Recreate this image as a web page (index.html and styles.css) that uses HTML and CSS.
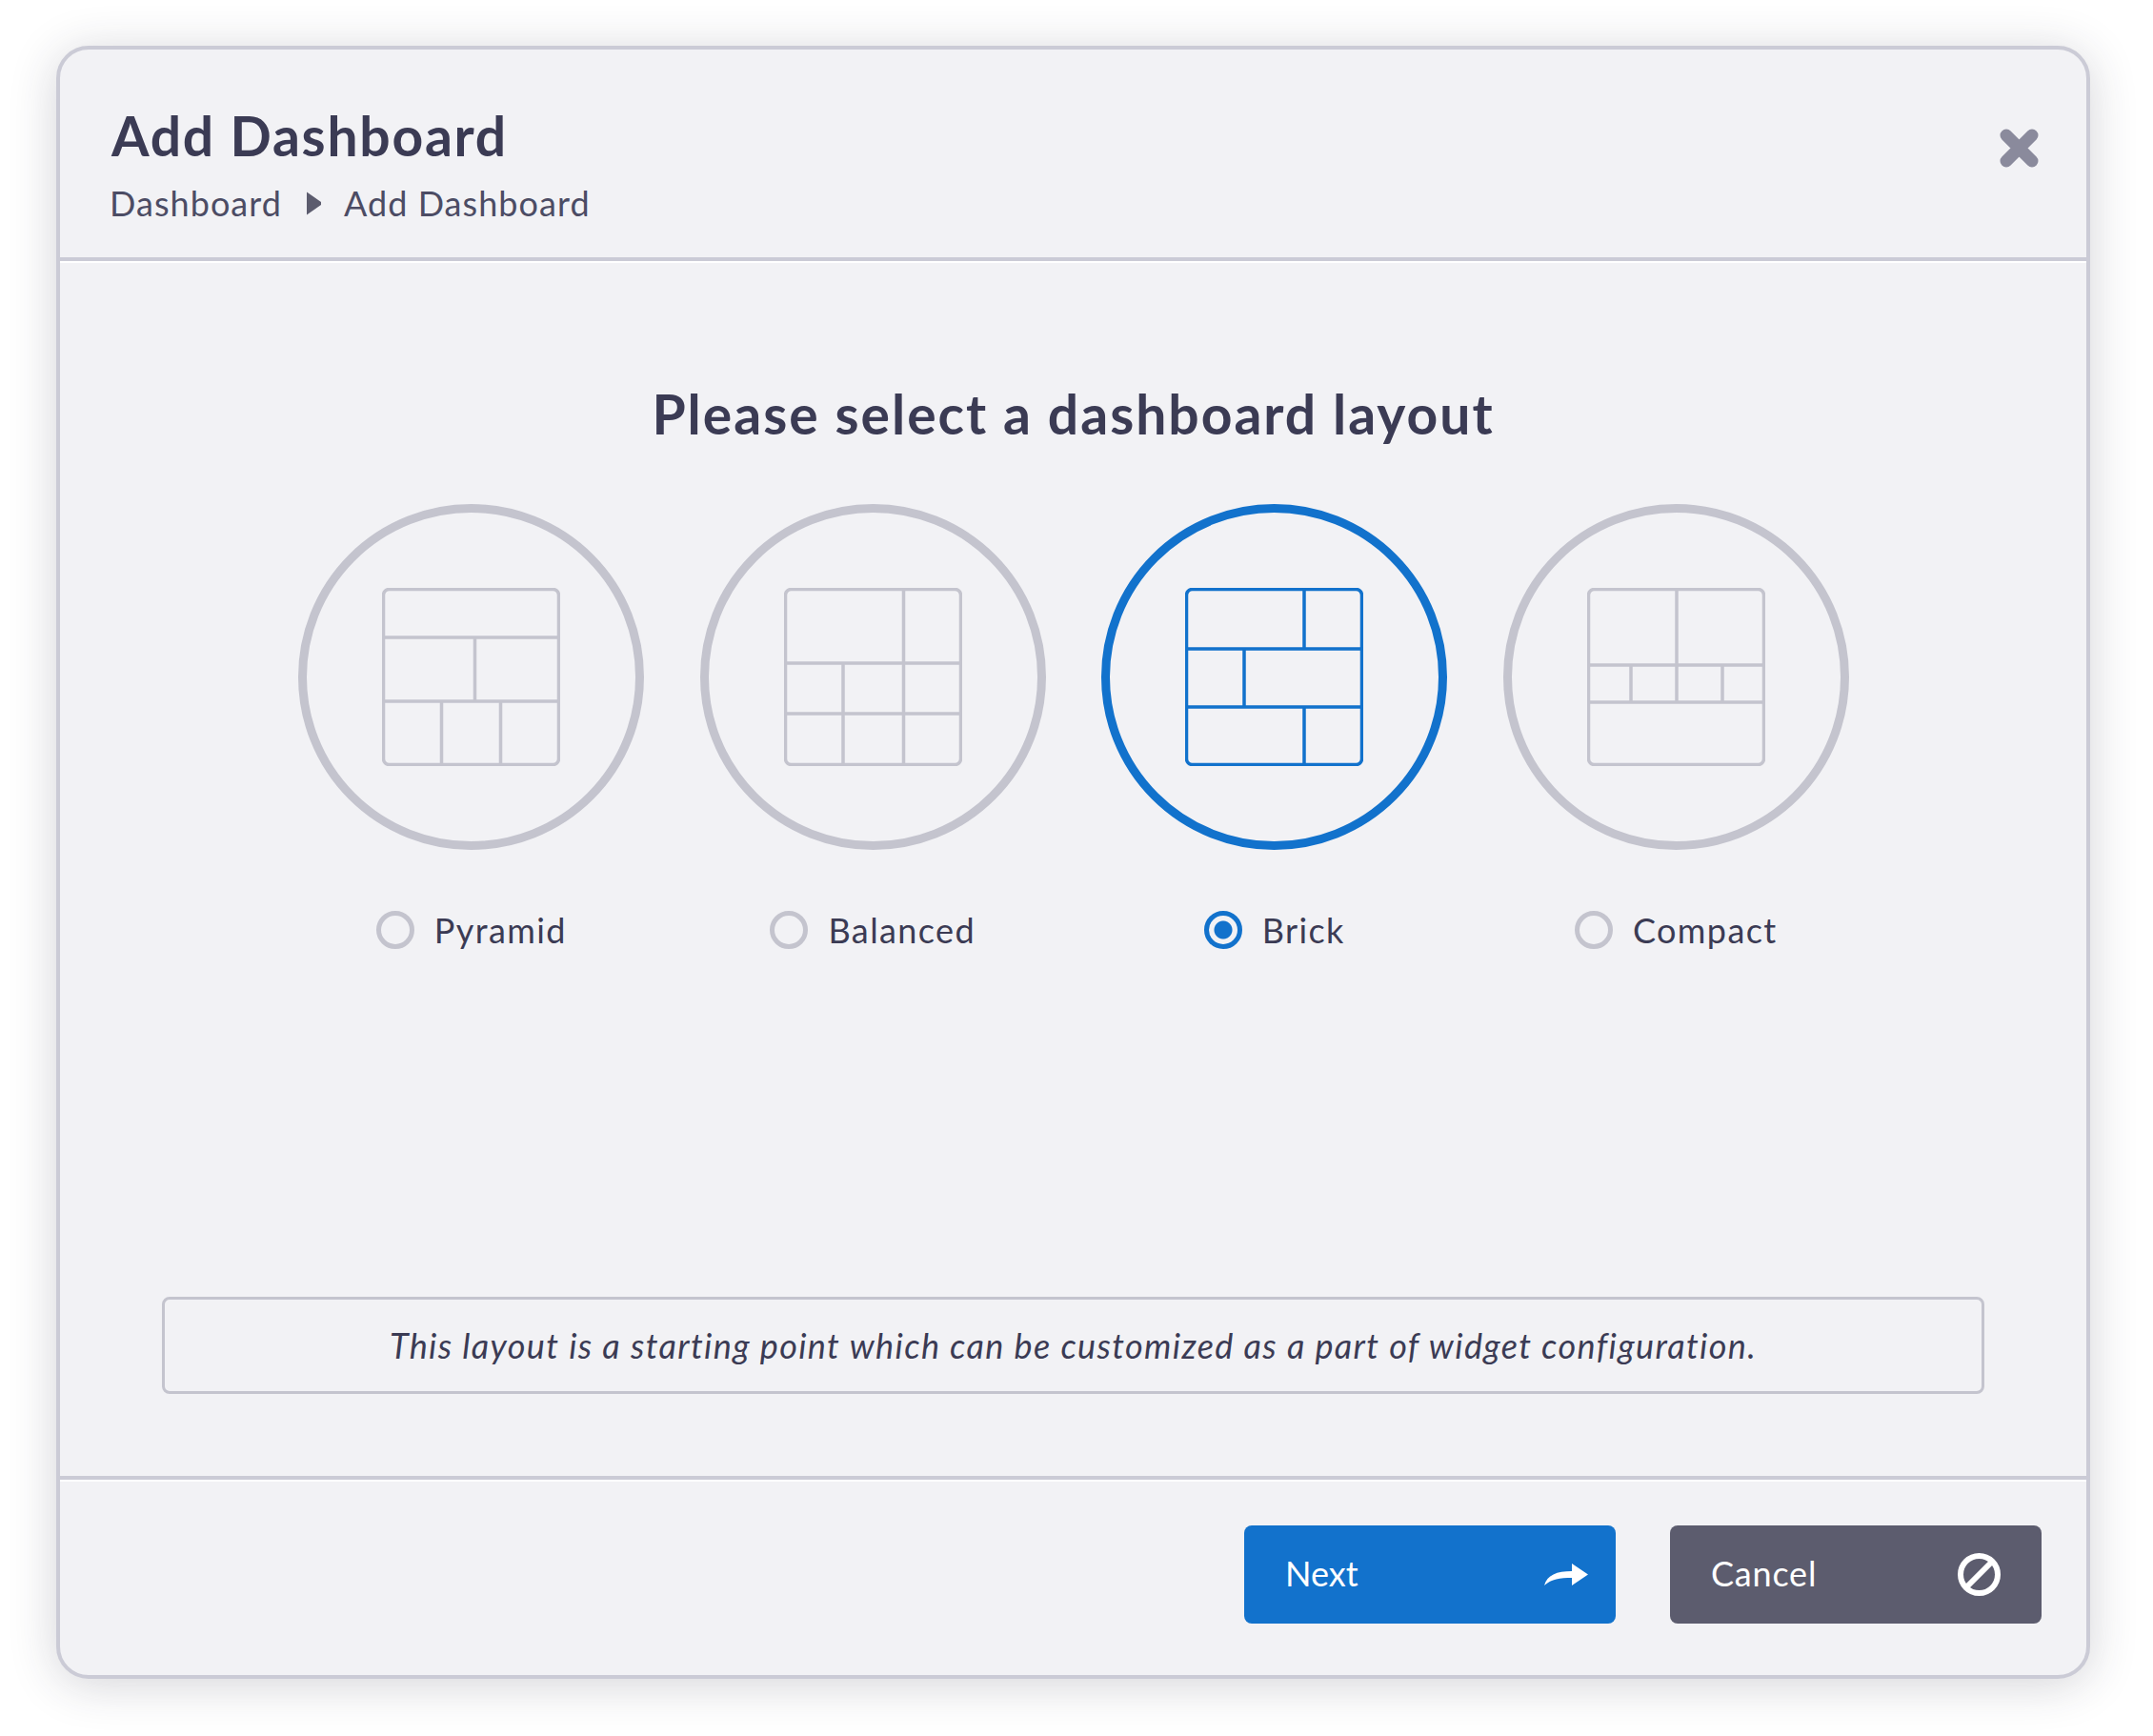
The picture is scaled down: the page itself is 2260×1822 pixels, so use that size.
FILE: index.html
```html
<!DOCTYPE html>
<html>
  <head>
    <title>Add Dashboard</title>
    <link rel="stylesheet" href="styles.css">
  </head>
  <body>
    <div class="modal">
      <div class="modal-header">
        <div>
          <h1 class="title">Add Dashboard</h1>
          <div class="crumbs">
            <span>Dashboard</span>
            <svg class="crumb-arrow" viewBox="0 0 17 27"><path d="M1 1.500 16 12 16 15 1 25.500Z"/></svg>
            <span>Add Dashboard</span>
          </div>
        </div>
        <svg class="close" viewBox="0 0 41 41"><path d="M7 7 34 34M34 7 7 34"/></svg>
      </div>

      <div class="modal-body">
        <h2 class="question">Please select a dashboard layout</h2>
        <div class="layouts">
          <div class="layout">
            <div class="circle">
              <svg class="grid-icon" viewBox="0 0 187 187">
                <rect x="1.500" y="1.500" width="184" height="184" rx="6"/>
                <path d="M0 52H187M0 119H187M97.500 52V119M62.500 119V187M124.500 119V187"/>
              </svg>
            </div>
            <div class="choice"><span class="radio"></span><span>Pyramid</span></div>
          </div>
          <div class="layout">
            <div class="circle">
              <svg class="grid-icon" viewBox="0 0 187 187">
                <rect x="1.500" y="1.500" width="184" height="184" rx="6"/>
                <path d="M0 79H187M0 132H187M125.500 0V187M62 79V187"/>
              </svg>
            </div>
            <div class="choice"><span class="radio"></span><span>Balanced</span></div>
          </div>
          <div class="layout selected">
            <div class="circle">
              <svg class="grid-icon" viewBox="0 0 187 187">
                <rect x="1.500" y="1.500" width="184" height="184" rx="6"/>
                <path d="M0 64H187M0 125H187M125 0V64M62 64V125M125 125V187"/>
              </svg>
            </div>
            <div class="choice"><span class="radio"></span><span>Brick</span></div>
          </div>
          <div class="layout">
            <div class="circle">
              <svg class="grid-icon" viewBox="0 0 187 187">
                <rect x="1.500" y="1.500" width="184" height="184" rx="6"/>
                <path d="M0 81H187M0 120H187M94 0V120M46 81V120M142 81V120"/>
              </svg>
            </div>
            <div class="choice"><span class="radio"></span><span>Compact</span></div>
          </div>
        </div>
        <div class="note">This layout is a starting point which can be customized as a part of widget configuration.</div>
      </div>

      <div class="modal-footer">
        <button class="btn btn-next">
          <span>Next</span>
          <svg class="btn-icon" viewBox="0 0 46 23"><path d="M0 23C3 12 13 8 29 8V0L46 11.500 29 23V15C16 15 8 16 0 23Z"/></svg>
        </button>
        <button class="btn btn-cancel">
          <span>Cancel</span>
          <svg class="btn-icon ban" viewBox="0 0 45 45"><circle cx="22.500" cy="22.500" r="19.500"/><path d="M9 36 36 9"/></svg>
        </button>
      </div>
    </div>
  </body>
</html>
```

FILE: styles.css
```css
html {
  height: 100%;
}
body {
  box-sizing: border-box;
  min-height: 100%;
  margin: 0;
  padding: 48px 0 60px 59px;
  background: #fff;
  font-family: Lato, "Noto Sans", sans-serif;
  color: #3b3b54;
}
.modal {
  display: flex;
  flex-direction: column;
  box-sizing: border-box;
  width: 2135px;
  height: 1714px;
  background: #f2f2f5;
  border: 4px solid #cbcbd6;
  border-radius: 34px;
  box-shadow: 0 6px 50px rgba(40, 40, 60, 0.2);
}
.modal-header {
  display: flex;
  justify-content: space-between;
  height: 218px;
  padding: 0 50px 0 54px;
  border-bottom: 4px solid #cbcbd6;
  box-shadow: 0 2px 0 #fff;
}
.title {
  margin: 0;
  padding-top: 56px;
  font-size: 57px;
  line-height: 68px;
  font-weight: 700;
  letter-spacing: 1.75px;
}
.crumbs {
  display: flex;
  align-items: center;
  margin: 14px 0 0 -2px;
  font-size: 36px;
  line-height: 46px;
  letter-spacing: 1.05px;
  color: #4c4c64;
}
.crumb-arrow {
  width: 17px;
  height: 27px;
  margin: 0 23px 0 25px;
  fill: #5c5c6e;
}
.close {
  width: 41px;
  height: 41px;
  margin-top: 83px;
  fill: none;
  stroke: #8a8a9c;
  stroke-width: 13;
  stroke-linecap: round;
}
.modal-body {
  display: flex;
  flex: 1;
  flex-direction: column;
  align-items: center;
  padding: 0 107px 86px;
}
.question {
  margin: 126px 0 0;
  font-size: 57px;
  line-height: 68px;
  font-weight: 700;
  letter-spacing: 2px;
}
.layouts {
  display: flex;
  gap: 58.5px;
  margin: 61px 0 0 1px;
}
.layout {
  display: flex;
  flex-direction: column;
  align-items: center;
  width: 363px;
}
.circle {
  display: flex;
  align-items: center;
  justify-content: center;
  box-sizing: border-box;
  width: 363px;
  height: 363px;
  border: 9px solid #c4c4ce;
  border-radius: 50%;
}
.grid-icon {
  width: 187px;
  height: 187px;
  fill: none;
  stroke: #c4c4ce;
  stroke-width: 3.5;
}
.choice {
  display: flex;
  align-items: center;
  gap: 21px;
  margin-top: 64px;
  height: 40px;
  font-size: 36px;
  letter-spacing: 1.4px;
}
.radio {
  box-sizing: border-box;
  width: 40px;
  height: 40px;
  border: 5px solid #c4c4ce;
  border-radius: 50%;
}
.selected .circle {
  border-color: #1272cc;
}
.selected .grid-icon {
  stroke: #1272cc;
}
.selected .radio {
  border-color: #1272cc;
  background: radial-gradient(circle, #1272cc 0 9px, transparent 10px);
}
.note {
  box-sizing: border-box;
  width: 100%;
  height: 102px;
  margin-top: auto;
  border: 3px solid #c4c4ce;
  border-radius: 8px;
  text-align: center;
  font-size: 36px;
  line-height: 96px;
  font-style: italic;
  letter-spacing: 1.37px;
}
.modal-footer {
  display: flex;
  justify-content: flex-end;
  gap: 57px;
  height: 209px;
  padding: 48px 47px 0 0;
  box-sizing: border-box;
  border-top: 4px solid #cbcbd6;
  box-shadow: inset 0 2px 0 #fff;
}
.btn {
  display: flex;
  align-items: center;
  justify-content: space-between;
  box-sizing: border-box;
  width: 390px;
  height: 103px;
  padding: 0 29px 3px 43px;
  border: 0;
  border-radius: 8px;
  color: #fff;
  font-family: inherit;
  font-size: 36px;
}
.btn-next {
  background: #1272cc;
}
.btn-cancel {
  background: #5c5c6e;
  padding-right: 43px;
  letter-spacing: 0.8px;
}
.btn-icon {
  width: 46px;
  height: 23px;
  margin-top: 3px;
  fill: #fff;
}
.ban {
  width: 45px;
  height: 45px;
  fill: none;
  stroke: #fff;
  stroke-width: 6;
}
```
